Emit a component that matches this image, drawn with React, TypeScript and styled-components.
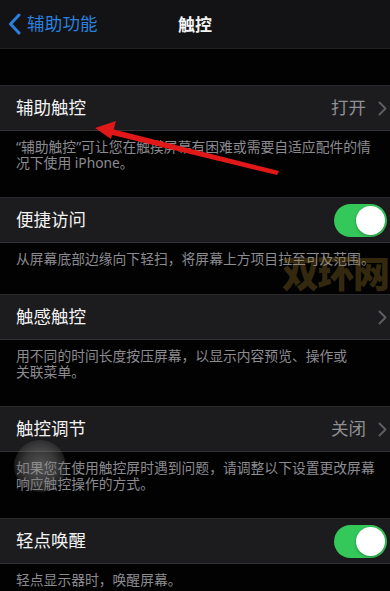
import React from "react";
import styled, { createGlobalStyle } from "styled-components";

const Global = createGlobalStyle`
  html, body { margin: 0; padding: 0; background: #000; }
  body { font-family: "Noto Sans", "Noto Sans CJK SC", sans-serif; -webkit-font-smoothing: antialiased; }
`;

const Page = styled.div`
  position: relative;
  width: 390px;
  height: 591px;
  overflow: hidden;
  background: #020203;
  display: flex;
  flex-direction: column;
`;

const NavBar = styled.div`
  height: 49px;
  flex: none;
  background: #131315;
  border-bottom: 1px solid #1f1f21;
  box-sizing: border-box;
  display: grid;
  grid-template-columns: 1fr auto 1fr;
  align-items: center;
  padding: 0 8px;
`;

const Back = styled.div`
  display: flex;
  align-items: center;
  gap: 6px;
  color: #2a80de;
  font-size: 17.5px;
  line-height: 1;
  letter-spacing: 0.2px;
`;

const Title = styled.div`
  color: #f4f4f4;
  font-size: 17px;
  font-weight: 700;
  line-height: 1;
`;

const Spacer = styled.div<{ h: number }>`
  height: ${(p) => p.h}px;
  flex: none;
`;

const Cell = styled.div`
  height: 46px;
  flex: none;
  box-sizing: border-box;
  background: #1c1c1e;
  border-top: 1px solid #2a2a2c;
  border-bottom: 1px solid #343436;
  display: flex;
  align-items: center;
  padding: 0 3px 0 16px;
`;

const CellLabel = styled.div`
  flex: 1;
  color: #f3f3f3;
  font-size: 17.5px;
  line-height: 1;
`;

const CellValue = styled.div`
  color: #8f8f94;
  font-size: 17.5px;
  line-height: 1;
  margin-right: 12px;
`;

const Footer = styled.div<{ lines: number }>`
  flex: none;
  box-sizing: border-box;
  height: ${(p) => (p.lines === 2 ? 66 : 51)}px;
  padding: 8px 0 0 16px;
  color: #8b8b90;
  font-size: 13.8px;
  line-height: 16px;
  white-space: nowrap;
`;

const Track = styled.div`
  width: 53px;
  height: 33px;
  border-radius: 17px;
  background: #34c759;
  display: flex;
  align-items: center;
  justify-content: flex-end;
  padding: 0 2px;
  box-sizing: border-box;
`;

const Knob = styled.div`
  width: 29px;
  height: 29px;
  border-radius: 50%;
  background: #fff;
  box-shadow: 0 1px 3px rgba(0, 0, 0, 0.3);
`;

const Overlay = styled.svg`
  position: absolute;
  left: 0;
  top: 0;
  pointer-events: none;
`;

const Watermark = styled.div`
  position: absolute;
  left: 282px;
  top: 254px;
  font-family: "Noto Sans CJK SC", sans-serif;
  font-size: 37px;
  font-weight: 900;
  letter-spacing: -1.5px;
  color: rgba(150, 118, 38, 0.36);
  line-height: 1;
  pointer-events: none;
`;

const Touch = styled.div`
  position: absolute;
  left: 14px;
  top: 440px;
  width: 52px;
  height: 52px;
  border-radius: 50%;
  background: radial-gradient(circle, rgba(150, 150, 150, 0.55) 0%, rgba(120, 120, 120, 0.45) 45%, rgba(90, 90, 90, 0.2) 75%, rgba(60, 60, 60, 0) 100%);
  pointer-events: none;
`;

const Chevron = () => (
  <svg width="9" height="15" viewBox="0 0 9 15">
    <path d="M1.5 1.5 L7.5 7.5 L1.5 13.5" fill="none" stroke="#5d5d62" strokeWidth="2" strokeLinecap="round" strokeLinejoin="round" />
  </svg>
);

const BackChevron = () => (
  <svg width="13" height="22" viewBox="0 0 13 22">
    <path d="M11 2 L2.5 11 L11 20" fill="none" stroke="#2a80de" strokeWidth="3" strokeLinecap="round" strokeLinejoin="round" />
  </svg>
);

const Toggle = () => (
  <Track>
    <Knob />
  </Track>
);

type Row = {
  label: string;
  value?: string;
  kind: "link" | "toggle";
  footer: string[];
};

const rows: Row[] = [
  { label: "辅助触控", value: "打开", kind: "link", footer: ["“辅助触控”可让您在触摸屏幕有困难或需要自适应配件的情", "况下使用 iPhone。"] },
  { label: "便捷访问", kind: "toggle", footer: ["从屏幕底部边缘向下轻扫，将屏幕上方项目拉至可及范围。"] },
  { label: "触感触控", kind: "link", footer: ["用不同的时间长度按压屏幕，以显示内容预览、操作或", "关联菜单。"] },
  { label: "触控调节", value: "关闭", kind: "link", footer: ["如果您在使用触控屏时遇到问题，请调整以下设置更改屏幕", "响应触控操作的方式。"] },
  { label: "轻点唤醒", kind: "toggle", footer: ["轻点显示器时，唤醒屏幕。"] },
];

export default function App() {
  return (
    <>
      <Global />
      <Page>
        <NavBar>
          <Back>
            <BackChevron />
            <span>辅助功能</span>
          </Back>
          <Title>触控</Title>
          <div />
        </NavBar>
        <Spacer h={36} />
        {rows.map((r) => (
          <React.Fragment key={r.label}>
            <Cell>
              <CellLabel>{r.label}</CellLabel>
              {r.value && <CellValue>{r.value}</CellValue>}
              {r.kind === "link" ? <Chevron /> : <Toggle />}
            </Cell>
            <Footer lines={r.footer.length}>
              {r.footer.map((l) => (
                <div key={l}>{l}</div>
              ))}
            </Footer>
          </React.Fragment>
        ))}
        <Watermark>双环网</Watermark>
        <Touch />
        <Overlay width="390" height="591" viewBox="0 0 390 591">
          <path d="M110 128.5 L279 171 L277 175 L108 134 Z" fill="#e01818" />
          <path d="M95 128 L116 121 L111 139 Z" fill="#e01818" />
        </Overlay>
      </Page>
    </>
  );
}
